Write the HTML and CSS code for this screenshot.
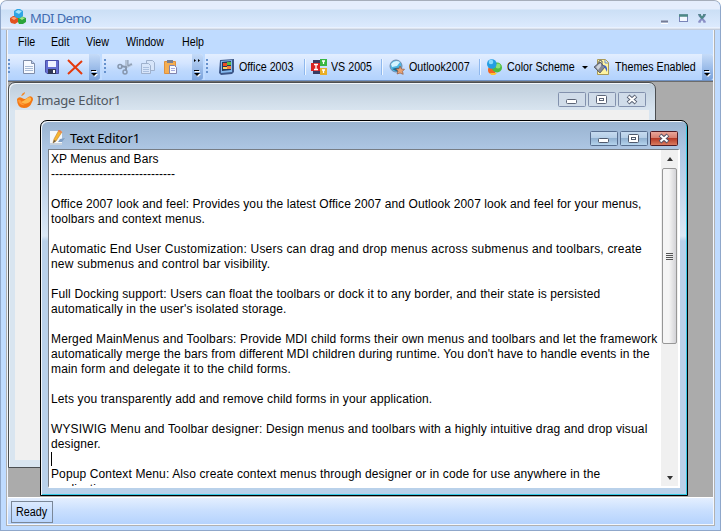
FILE: index.html
```html
<!DOCTYPE html>
<html lang="en">
<head>
<meta charset="utf-8">
<title>MDI Demo</title>
<link rel="stylesheet" href="styles.css">
</head>
<body>
<div class="app">
  <header class="titlebar">
    <svg class="icon app-icon" viewBox="0 0 16 16"><path d="M0 9l3-2h4l1 2v4l-3 2-4-1-1-2z" fill="#e2521f"/><path d="M1 9l3-1 3 1-3 2z" fill="#ffa377"/><path d="M8 9l3-2 5 2v4l-3 2H9l-1-2z" fill="#2ba43b"/><path d="M9 9l3-1 3 1-3 2z" fill="#a1e885"/><path d="M4 2l3-2h3l3 2v5l-3 2H7L4 7z" fill="#2ea5e4"/><path d="M5 3l3-2 4 1-3 3z" fill="#a5e4fb"/></svg>
    <h1>MDI Demo</h1>
    <svg class="caption" width="48" height="10" viewBox="0 0 48 10"><path d="M1 7.500h7" stroke="#767c96" stroke-width="2"/><path d="M1 9.500h7" stroke="#fff"/><rect x="19.500" y="1" width="8" height="6.500" fill="#f4f8ff" stroke="#7984b8"/><path d="M19 1.500h9" stroke="#4d8986" stroke-width="2.500"/><path d="M39 1l6 7M45 1l-6 7" stroke="#8a8fc6" stroke-width="2"/><path d="M39.500 1l2.500 3L44.500 1" fill="none" stroke="#4d8986" stroke-width="2"/><path d="M38 .7h3M43 .7h3" stroke="#4d7986"/><path d="M38 8h3M43 8h3" stroke="#8a8fc6"/></svg>
  </header>
  <div class="client">
    <nav class="menu"><span>File</span><span>Edit</span><span>View</span><span>Window</span><span>Help</span></nav>
    <div class="toolbars">
      <div class="bar bar-file">
        <i class="grip"></i>
        <svg class="icon" viewBox="0 0 16 16"><path d="M2.500 1.500h8l3 3v10h-11z" fill="#f7faff" stroke="#7f8da9"/><path d="M10.500 1.500v3h3" fill="#b9cbed" stroke="#7f8da9"/><path d="M4 7.500h8M4 9.500h8M4 11.500h8" stroke="#a9bbd5"/></svg>
        <svg class="icon" viewBox="0 0 16 16"><path d="M1.500 1.500h13v13H3l-1.500-1.500z" fill="#6670d2" stroke="#4a4fa6"/><path d="M4 2h8v6H4z" fill="#f0f3ff"/><path d="M4 10h8v5H4z" fill="#313857"/><path d="M9 11h2v3H9z" fill="#fff"/></svg>
        <svg class="icon" viewBox="0 0 16 16"><path d="M1 1l14 14M15 2L1 15" fill="none" stroke="#e43a0d" stroke-width="2"/></svg>
        <svg class="end" viewBox="0 0 11 26"><path d="M3 17.500h5" stroke="#fff"/><path d="M2 16.500h5" stroke="#000"/><path d="M3 20h6l-3 3z" fill="#fff"/><path d="M2 19h6l-3 3z"/></svg>
      </div>
      <div class="bar bar-edit">
        <i class="grip"></i>
        <svg class="icon" viewBox="0 0 16 16"><path d="M9.500 1v7M15 5L9 8" fill="none" stroke="#b3c2d6" stroke-width="3"/><path d="M11 1v6l4-2" fill="none" stroke="#8797ae"/><path d="M4 7l5 1v4" fill="none" stroke="#8797ae" stroke-width="2"/><circle cx="3" cy="7.500" r="2" fill="none" stroke="#8797ae" stroke-width="1.500"/><circle cx="8" cy="13" r="2" fill="none" stroke="#8797ae" stroke-width="1.500"/></svg>
        <svg class="icon" viewBox="0 0 16 16"><g fill="#d7e5fa" stroke="#9fb1cd"><path d="M6.500 1.500h6l2 2v8h-8z"/><path d="M1.500 4.500h7l2 2v8h-9z"/></g><path d="M3 8.500h6M3 10.500h6M3 12.500h6" stroke="#aabfde"/></svg>
        <svg class="icon" viewBox="0 0 16 16"><path d="M1.500 2.500h11v12h-11z" fill="#f5ae52" stroke="#e0913c"/><path d="M4 1h6v3H4z" fill="#797f91"/><path d="M6.500 6.500h5l2 2v6h-7z" fill="#f7faff" stroke="#8183ad"/><path d="M8 9.500h4M8 11.500h4" stroke="#a4a9dc"/></svg>
        <svg class="end" viewBox="0 0 11 26"><path d="M2 5l2 1.500L2 8zM6 5l2 1.500L6 8z"/><path d="M3 17.500h5" stroke="#fff"/><path d="M2 16.500h5" stroke="#000"/><path d="M3 20h6l-3 3z" fill="#fff"/><path d="M2 19h6l-3 3z"/></svg>
      </div>
      <div class="bar bar-theme">
        <i class="grip"></i>
        <svg class="icon" viewBox="0 0 16 16"><path d="M1 1l14-1v13L13 15 2 16l-2-2z" fill="#3d5788"/><path d="M2 2l11-1v12L2 14z" fill="#84b9ee"/><path d="M3 3l9-1v9l-9 1z" fill="#26375b"/><path d="M4 4h4v3H4z" fill="#ed4c22"/><path d="M8 3h4v3H8z" fill="#57bb43"/><path d="M4 8h4v2H4z" fill="#ffd25d"/><path d="M8 7h4v3H8z" fill="#f5803c"/></svg>
        <span class="label w-office">Office 2003</span><i class="sep"></i>
        <svg class="icon" viewBox="0 0 16 16"><path d="M2 1h7v4H2zM2 11h7v4H2z" fill="#393b61"/><path d="M0 4h9v8H0z" fill="#d92424"/><path d="M9 0h7v7H9z" fill="#38b642"/><path d="M9 9h7v7H9z" fill="#e8ae28"/><path d="M3 5.500h4M5 6v4M3 10.500h4M11 2h3M12.500 2v3M11 11h3M12.500 11v3" stroke="#fff" stroke-width="1.300"/></svg>
        <span class="label w-vs">VS 2005</span><i class="sep"></i>
        <svg class="icon" viewBox="0 0 16 16"><circle cx="7" cy="7" r="6" fill="#4cb5e2" stroke="#748aa9"/><path d="M2 5q4-5 9-2l-3 4-5 1z" fill="#d4f4ff"/><path d="M3 10q5-2 9-1l-3 4z" fill="#216b91"/><path d="M11 7l1.500 3 3 .3-2 2 .7 3-3.200-1.300L8 15l1-3-2-2 3-.3z" fill="#e7a273" stroke="#925c46" stroke-width=".7"/></svg>
        <span class="label w-outlook">Outlook2007</span><i class="sep"></i>
        <svg class="icon" viewBox="0 0 16 16"><circle cx="5" cy="11" r="4" fill="#f26422"/><path d="M3 14h7l-2 2H4z" fill="#ffc432"/><circle cx="10" cy="8.500" r="5" fill="#4dbb41"/><circle cx="11" cy="7" r="2.500" fill="#8de077"/><circle cx="4.800" cy="5" r="4.800" fill="#249ee2"/><circle cx="4" cy="3" r="2.300" fill="#8adafb"/></svg>
        <span class="label w-scheme">Color Scheme</span>
        <svg class="drop" viewBox="0 0 6 3"><path d="M0 0h6L3 3z"/></svg>
        <svg class="icon" viewBox="0 0 16 16"><path d="M3.500.5h8l3 3v12h-11z" fill="#fff4a1" stroke="#a99958"/><path d="M11 1v3h3" fill="#d8f1ff" stroke="#718dba"/><path d="M0 8l6-5 5 5-5 6z" fill="#848996" stroke="#424757" stroke-width=".7"/><path d="M2 8l4-4 2 2-4 5z" fill="#cdd3dc"/><path d="M5 5q-1-5 3-3v5" fill="none" stroke="#555b68"/><path d="M9 6q5 0 4 7l-2-4z" fill="#3e62c6"/></svg>
        <span class="label w-themes">Themes Enabled</span>
        <svg class="end" viewBox="0 0 11 26"><path d="M3 17.500h5" stroke="#fff"/><path d="M2 16.500h5" stroke="#000"/><path d="M3 20h6l-3 3z" fill="#fff"/><path d="M2 19h6l-3 3z"/></svg>
      </div>
    </div>
    <main class="desktop">
      <section class="win image-win">
        <div class="win-title">
          <svg class="icon" viewBox="0 0 16 16"><path d="M0 7q2-3 5-1 3 2 5 0 3-3 5-1 2 2 0 5-2 6-8 6-7 0-7-9z" fill="#f47813"/><path d="M9 7q3-3 5-1 1 3-3 5-4 2-7-1 3-1 5-3z" fill="#ffb84c"/><path d="M1 8q2-1 3 1 1 3 4 4-6 1-7-5z" fill="#ff9a3a"/><path d="M4 4q1-3 4-4 0 3-4 4z" fill="#f28a2c"/></svg>
          <h2>Image Editor1</h2>
          <svg class="buttons" width="88" height="15" viewBox="0 0 88 15"><g fill="#d0dce9" stroke="#8291ad"><rect x=".5" y=".5" width="27" height="14" rx="1"/><rect x="30.500" y=".5" width="27" height="14" rx="1"/><rect x="60.500" y=".5" width="27" height="14" rx="1"/></g><g fill="#fff" stroke="#5c6577"><rect x="8.500" y="7.500" width="10" height="4" rx="1"/><rect x="38.500" y="3.500" width="10" height="8" rx="1"/><rect x="41.500" y="6.500" width="4" height="2"/></g><path d="M70 4l8 7M78 4l-8 7" stroke="#5c6577" stroke-width="4"/><path d="M70.500 4.500l7 6M77.500 4.500l-7 6" stroke="#fff" stroke-width="2"/></svg>
        </div>
        <div class="canvas"></div>
      </section>
      <section class="win text-win">
        <div class="win-title">
          <svg class="icon" viewBox="0 0 16 16"><path d="M1 1h12v14H1z" fill="#f6f8fa"/><path d="M1 13h12v2H1z" fill="#c7d1dc"/><path d="M11 9l5-1-3 4H9z" fill="#7f9fc5"/><path d="M10 0l3 2-6 9-3 2 1-4z" fill="#f7b530" stroke="#bd8531" stroke-width=".6"/><path d="M10 0l3 2-1 1-3-2z" fill="#e97960"/><path d="M4 13l1-3 2 1z" fill="#575757"/></svg>
          <h2>Text Editor1</h2>
          <svg class="buttons" width="88" height="15" viewBox="0 0 88 15"><defs><linearGradient id="blue" x2="0" y2="1"><stop stop-color="#c8dcf0"/><stop offset=".48" stop-color="#b4cde6"/><stop offset=".5" stop-color="#91b1d1"/><stop offset="1" stop-color="#b8d7ef"/></linearGradient><linearGradient id="red" x2="0" y2="1"><stop stop-color="#eba99d"/><stop offset=".48" stop-color="#d77c6c"/><stop offset=".5" stop-color="#b73b27"/><stop offset="1" stop-color="#dc8064"/></linearGradient></defs><g fill="url(#blue)" stroke="#586f90"><rect x=".5" y=".5" width="27" height="14" rx="1"/><rect x="30.500" y=".5" width="27" height="14" rx="1"/></g><rect x="60.500" y=".5" width="27" height="14" rx="1" fill="url(#red)" stroke="#511c25"/><g fill="#fff" stroke="#4e596c"><rect x="8.500" y="7.500" width="10" height="4" rx="1"/><rect x="38.500" y="3.500" width="10" height="8" rx="1"/><rect x="41.500" y="6.500" width="4" height="2"/></g><path d="M70 4l8 7M78 4l-8 7" stroke="#555367" stroke-width="4"/><path d="M70.500 4.500l7 6M77.500 4.500l-7 6" stroke="#fff" stroke-width="2"/></svg>
        </div>
        <div class="editor">
          <div class="text"><span class="t6">XP Menus and Bars</span>
-------------------------------

<span class="t8">Office 2007 look and feel: Provides you the latest Office 2007 and Outlook 2007 look and feel for your menus,</span>
<span class="t12">toolbars and context menus.</span>

<span class="t20">Automatic End User Customization: Users can drag and drop menus across submenus and toolbars, create</span>
<span class="t20">new submenus and control bar visibility.</span>

<span class="t14">Full Docking support: Users can float the toolbars or dock it to any border, and their state is persisted</span>
<span class="t14">automatically in the user's isolated storage.</span>

<span class="t14">Merged MainMenus and Toolbars: Provide MDI child forms their own menus and toolbars and let the framework</span>
<span class="t10">automatically merge the bars from different MDI children during runtime. You don't have to handle events in the</span>
<span class="t14">main form and delegate it to the child forms.</span>

<span class="t12">Lets you transparently add and remove child forms in your application.</span>

<span class="t14">WYSIWIG Menu and Toolbar designer: Design menus and toolbars with a highly intuitive drag and drop visual</span>
<span class="t12">designer.</span>
<i class="caret"></i>
<span class="t12">Popup Context Menu: Also create context menus through designer or in code for use anywhere in the</span>
<span class="t12">application.</span></div>
          <div class="scroll">
            <svg class="arrow" viewBox="0 0 6 4"><path d="M0 4l3-4 3 4z"/></svg>
            <div class="thumb"><i></i><i></i><i></i><i></i></div>
            <svg class="arrow down" viewBox="0 0 6 4"><path d="M0 0h6L3 4z"/></svg>
          </div>
        </div>
      </section>
    </main>
    <footer><div class="ready"><span>Ready</span></div></footer>
  </div>
</div>
</body>
</html>
```
FILE: styles.css
```css
* { box-sizing: border-box; }
body { margin: 0; background: #fff; font: 12px/15px "Liberation Sans", Arial, sans-serif; color: #000; overflow: hidden; }
svg { display: block; flex: none; }
.icon { width: 16px; height: 16px; }
.app { width: 721px; height: 531px; background: #bfdbff; border: 1px solid #8fa7ca; border-top-color: #a6adba; border-radius: 7px 7px 0 0; padding: 0 5px 5px; overflow: hidden; }
.titlebar { height: 29px; margin: 0 -5px; padding: 0 15px 0 9px; display: flex; align-items: center; background: linear-gradient(#e5edfc 0 8px, #cbdff5 9px, #dceafe 26px, #f6f9ff 27px, #c3cddd 28px); }
.app-icon { margin: 2px 4px 0 0; }
.titlebar h1 { margin: 4px auto 0 0; color: #416cb2; font: 13px/18px "Noto Sans", sans-serif; letter-spacing: -.6px; }
.caption { margin: 7px -3px 0 0; }
.client { height: 496px; border: solid #b1b1b1; border-width: 0 1px 1px; padding: 0 1px 1px; background: #f2f7ff; }
.menu { display: grid; grid-template-columns: 33px 35px 40px 56px 1fr; height: 24px; padding: 5px 0 0 10px; background: #bfdbff; }
.menu span { transform: scaleX(.89); transform-origin: left; width: max-content; }
.toolbars { display: flex; gap: 2px; height: 27px; background: #bfdbff; border-bottom: 1px solid #6f91c2; }
.bar { display: flex; align-items: center; height: 26px; background: linear-gradient(#e2eeff, #d4e5ff 35%, #bed9fd 65%, #b2d2fd); border-radius: 0 3px 3px 0; }
.bar-file { width: 92px; }
.bar-edit { width: 101px; padding-left: 2px; }
.bar-theme { flex: 1; padding-left: 1px; }
.grip { flex: none; width: 2px; height: 15px; margin-bottom: 2px; background: repeating-linear-gradient(#6591cd 0 2px, transparent 2px 4px); }
.bar-file > .icon { margin-left: 7px; }
.bar-file > .grip + .icon { margin-left: 11px; }
.bar-edit > .icon { margin-left: 7px; }
.bar-edit > .grip + .icon { margin-left: 11px; }
.bar-theme > .grip + .icon { margin-left: 11px; }
.end { width: 11px; height: 26px; margin-left: auto; background: linear-gradient(#c5dbf8, #79a2dc); border-radius: 0 3px 3px 0; }
.label { display: block; flex: none; white-space: nowrap; transform: scaleX(.89); transform-origin: left; margin-left: 4px; }
.w-office { width: 64px; }
.w-vs { width: 45px; }
.w-outlook { width: 70px; }
.w-scheme { width: 75px; }
.w-themes { width: 83px; margin-left: 5px; }
.sep { width: 2px; height: 16px; flex: none; border-left: 1px solid #8fb8ee; border-right: 1px solid #eef6ff; margin: 0 6px 0 0; }
.w-office + .sep { margin-left: 1px; margin-right: 5px; }
.w-vs + .sep { margin-left: 5px; }
.drop { width: 6px; height: 3px; margin-right: 6px; }
.desktop { position: relative; height: 416px; background: #ababab; border-top: 1px solid #6c6c6c; overflow: hidden; }
.win { position: absolute; display: flex; flex-direction: column; border: 1px solid #35393f; border-radius: 7px 7px 0 0; box-shadow: inset 1px 1px #f2f6fa; }
.image-win { left: 0; top: 0; width: 648px; height: 386px; padding: 0 6px 7px; background: linear-gradient(#becddb, #d9e5f0 28px); border-color: #4b4e51; }
.win-title { height: 27px; flex: none; display: flex; align-items: center; }
.win-title h2 { margin: 7px auto 0 4px; font: 13px/18px "Noto Sans", sans-serif; letter-spacing: -.2px; }
.image-win h2 { color: #50575f; }
.win-title .icon { margin: 6px 0 0 2px; }
.image-win .buttons { margin: 6px 3px 0 0; }
.canvas { flex: 1; background: #f0f0f0; }
.text-win { left: 32px; top: 38px; width: 648px; height: 376px; padding: 0 7px 7px; background: linear-gradient(#99b3d0, #adc6e3 28px, #dbe8f5 115px, #b9d1ea 120px); border-color: #000; box-shadow: inset 1px 1px #f2f6fa, inset -1px -1px #35c8e3; }
.text-win .win-title { height: 28px; }
.text-win .win-title h2 { margin: 6px auto 0 5px; }
.text-win .win-title .icon { margin: 5px 0 0 1px; }
.text-win .buttons { margin: 6px 2px 0 0; }
.editor { flex: 1; min-height: 0; display: flex; border: solid #777d85; border-width: 1px 2px 2px 1px; border-right-color: #fff; border-bottom-color: #fff; background: #fff; overflow: hidden; }
.text { flex: 1; min-width: 0; padding: 2px 0 0 2px; white-space: pre; overflow: hidden; }
.t6 { letter-spacing: .06px; }
.t8 { letter-spacing: .085px; }
.t10 { letter-spacing: .1px; }
.t12 { letter-spacing: .12px; }
.t14 { letter-spacing: .143px; }
.t20 { letter-spacing: .2px; }
.caret { display: inline-block; width: 1px; height: 14px; background: #000; vertical-align: top; }
.scroll { width: 17px; flex: none; background: #f0f0f0; display: flex; flex-direction: column; align-items: center; padding: 7px 0 6px; }
.arrow { width: 6px; height: 4px; fill: #333; }
.thumb { width: 15px; height: 176px; margin-top: 7px; border: 1px solid #979797; border-radius: 2px; background: linear-gradient(90deg, #f5f5f5 45%, #d2d2d6); display: flex; flex-direction: column; justify-content: center; align-items: center; gap: 1px; }
.thumb i { width: 7px; height: 1px; background: #555; }
.down { margin-top: auto; }
footer { height: 27px; padding: 3px; background: linear-gradient(#e4efff, #cbe0fe 45%, #b5d3fd); border-top: 1px solid #fff; }
.ready { width: 42px; height: 22px; border: 1px solid #7a8798; padding: 3px 0 0 4px; }
.ready span { display: block; transform: scaleX(.9); transform-origin: left; }
```
